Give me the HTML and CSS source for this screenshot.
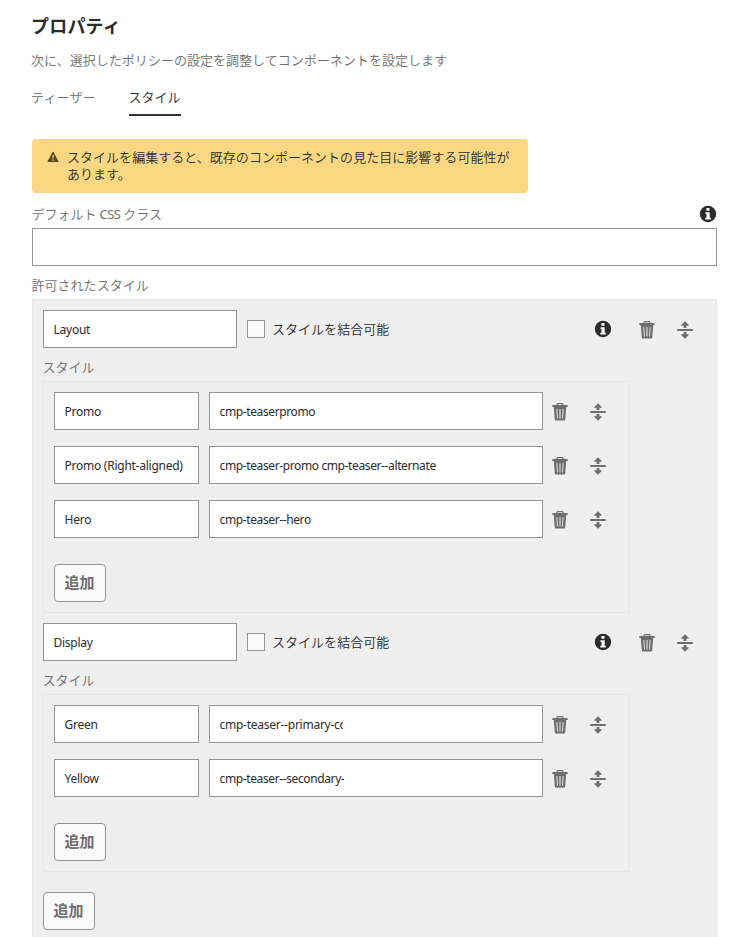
FILE: index.html
```html
<!DOCTYPE html>
<html lang="ja">
<head>
<meta charset="utf-8">
<title>プロパティ</title>
<link rel="stylesheet" href="styles.css">
</head>
<body>
<svg class="sprite" aria-hidden="true">
  <symbol id="info" viewBox="0 0 18 18"><circle cx="9" cy="9" r="8.2" fill="#2c2c2c"/><path fill="#fff" d="M7.4 3h3.1v2.8H7.4zM6.5 7.2h4.2v5.6h1.1v1.7H6.3v-1.7h1.2V8.900h-1z"/></symbol>
  <symbol id="trash" viewBox="0 0 18 18"><path fill="none" stroke="currentColor" stroke-width="1.1" d="M6 2.500V1.400q0-.8.8-.8h4.400q.8 0 .8.8v1.100"/><path fill="currentColor" d="M1.800 2h14.400q.5 0 .5.7v1.300H1.300v-1.300q0-.7.5-.7z"/><path fill="currentColor" fill-rule="evenodd" d="M2.800 4h12.400l-1 12.600q-.1.9-.9.9H4.700q-.8 0-.9-.9zM5.400 6l.6 9.500h.9L6.300 6zM8.500 6v9.500h1V6zM11.700 6l-.6 9.500h.9l.6-9.500z"/></symbol>
  <symbol id="move" viewBox="0 0 18 18"><path fill="currentColor" d="M1.200 8.100h15.600v1.800H1.200zM9 .2l3.700 3.800v.7h-2.300v2.300H7.600V4.700H5.300V4zM9 17.800l3.700-3.800v-.7h-2.300v-2.300H7.600v2.300H5.300v.7z"/></symbol>
</svg>
<main class="page">
  <h1 class="title">プロパティ</h1>
  <p class="intro">次に、選択したポリシーの設定を調整してコンポーネントを設定します</p>
  <nav class="tabs"><a class="tab">ティーザー</a><a class="tab tab--active">スタイル</a></nav>
  <div class="alert">
    <svg class="alert-icon" viewBox="0 0 12 12"><path fill="#5c481c" fill-rule="evenodd" d="M6 .8q.4 0 .6.4l4.800 9q.4.9-.5.9H1.100q-.9 0-.5-.9l4.800-9Q5.600.8 6 .8zM5.300 3.900l.2 3.500h1l.2-3.500zM5.300 8.500v1.300h1.400V8.500z"/></svg>
    <p class="alert-text">スタイルを編集すると、既存のコンポーネントの見た目に影響する可能性があります。</p>
  </div>
  <div class="label-row"><span class="label">デフォルト <span class="css">CSS</span> クラス</span><svg class="icon"><use href="#info"/></svg></div>
  <div class="field field--full"></div>
  <div class="label label--allowed">許可されたスタイル</div>
  <section class="panel">
    <div class="group-head">
      <div class="field field--group">Layout</div><span class="checkbox"></span><span class="check-label">スタイルを結合可能</span>
      <svg class="icon icon--info"><use href="#info"/></svg><svg class="icon"><use href="#trash"/></svg><svg class="icon"><use href="#move"/></svg>
    </div>
    <div class="label label--styles">スタイル</div>
    <div class="styles">
      <div class="row"><div class="field field--name">Promo</div><div class="field field--class">cmp-teaserpromo</div><svg class="icon"><use href="#trash"/></svg><svg class="icon"><use href="#move"/></svg></div>
      <div class="row"><div class="field field--name">Promo (Right-aligned)</div><div class="field field--class">cmp-teaser-promo cmp-teaser--alternate</div><svg class="icon"><use href="#trash"/></svg><svg class="icon"><use href="#move"/></svg></div>
      <div class="row"><div class="field field--name">Hero</div><div class="field field--class">cmp-teaser--hero</div><svg class="icon"><use href="#trash"/></svg><svg class="icon"><use href="#move"/></svg></div>
      <button class="add">追加</button>
    </div>
    <div class="group-head">
      <div class="field field--group">Display</div><span class="checkbox"></span><span class="check-label">スタイルを結合可能</span>
      <svg class="icon icon--info"><use href="#info"/></svg><svg class="icon"><use href="#trash"/></svg><svg class="icon"><use href="#move"/></svg>
    </div>
    <div class="label label--styles">スタイル</div>
    <div class="styles">
      <div class="row"><div class="field field--name">Green</div><div class="field field--class"><span class="clip">cmp-teaser--primary-co</span></div><svg class="icon"><use href="#trash"/></svg><svg class="icon"><use href="#move"/></svg></div>
      <div class="row"><div class="field field--name">Yellow</div><div class="field field--class"><span class="clip clip--tight">cmp-teaser--secondary-</span></div><svg class="icon"><use href="#trash"/></svg><svg class="icon"><use href="#move"/></svg></div>
      <button class="add">追加</button>
    </div>
    <button class="add add--group">追加</button>
  </section>
</main>
</body>
</html>
```
FILE: styles.css
```css
* { box-sizing: border-box; }
html { overflow: hidden; }
body {
  margin: 0;
  height: 937px;
  overflow: hidden;
  background: #fff;
  color: #2c2c2c;
  font: 350 13px/18px "Noto Sans CJK JP", sans-serif;
  letter-spacing: .03px;
}
.sprite { display: none; }
.page { width: 685px; margin-left: 32px; padding-top: 12px; }
.title { margin: 0 0 0 -1px; font-size: 18px; line-height: 26px; font-weight: 700; letter-spacing: .2px; }
.intro { margin: 13px 0 0 -1px; color: #6e6e6e; }
.tabs { display: flex; gap: 32px; height: 28px; margin-top: 19px; }
.tab { width: 66px; margin-left: -1px; color: #6e6e6e; letter-spacing: .2px; }
.tab--active { width: 52px; margin-left: 0; color: #2c2c2c; letter-spacing: 0; text-indent: -.5px; border-bottom: 2px solid #323232; }
.alert {
  display: flex;
  width: 496px;
  height: 54px;
  margin-top: 23px;
  padding: 9px 16px 0 15px;
  background: #fad783;
  border-radius: 4px;
}
.alert-icon { flex: none; width: 12px; height: 12px; margin: 3px 8px 0 0; }
.alert-text { margin: 0; line-height: 17px; width: 446px; }
.label-row { display: flex; justify-content: space-between; align-items: center; height: 18px; margin-top: 12px; }
.label { color: #6e6e6e; margin-left: -.5px; }
.css { font-family: "Noto Sans", sans-serif; font-weight: 400; letter-spacing: -.6px; }
.icon { flex: none; width: 18px; height: 18px; color: #6e6e6e; }
.field {
  display: flex;
  align-items: center;
  flex: none;
  height: 38px;
  padding: 2px 9.5px 0;
  border: 1px solid #959595;
  background: #fff;
  font-family: "Noto Sans", sans-serif;
  font-size: 12px;
  font-weight: 400;
  letter-spacing: -.25px;
  white-space: nowrap;
}
.field--full { width: 685px; margin-top: 5px; }
.label--allowed { margin-top: 10px; }
.panel {
  height: 660px;
  margin-top: 5px;
  padding: 10px;
  border: 1px solid #e6e6e6;
  background: #efefef;
}
.group-head { display: flex; align-items: center; }
.field--group { width: 194px; }
.checkbox { width: 18px; height: 18px; margin-left: 10px; border: 1px solid #959595; background: #fafafa; }
.check-label { margin-left: 7px; }
.group-head .icon { margin-top: 1px; margin-right: 20px; }
.group-head .icon--info { margin-top: 0; margin-left: auto; margin-right: 26px; }
.group-head .icon:last-child { margin-right: 12px; }
.label--styles { margin-top: 10px; }
.styles {
  width: 587px;
  margin: 5px 0 10px;
  padding: 10px;
  border: 1px solid #e6e6e6;
}
.row { display: flex; align-items: center; margin-bottom: 16px; }
.row .icon { margin-top: 2px; margin-right: 20px; }
.field--name { width: 145px; }
.field--class { width: 334px; margin: 0 8px 0 10px; letter-spacing: -.38px; }
.clip { width: 123.5px; overflow: hidden; letter-spacing: -.25px; }
.clip--tight { width: 124px; letter-spacing: -.38px; }
.add {
  display: block;
  width: 52px;
  height: 38px;
  margin: 26px 0 0;
  padding: 0 1px 2px 0;
  border: 1px solid #959595;
  border-radius: 4px;
  background: #fafafa;
  color: #6e6e6e;
  font: 700 15px/32px "Noto Sans CJK JP", sans-serif;
}
.add--group { margin-top: 20px; }
```
